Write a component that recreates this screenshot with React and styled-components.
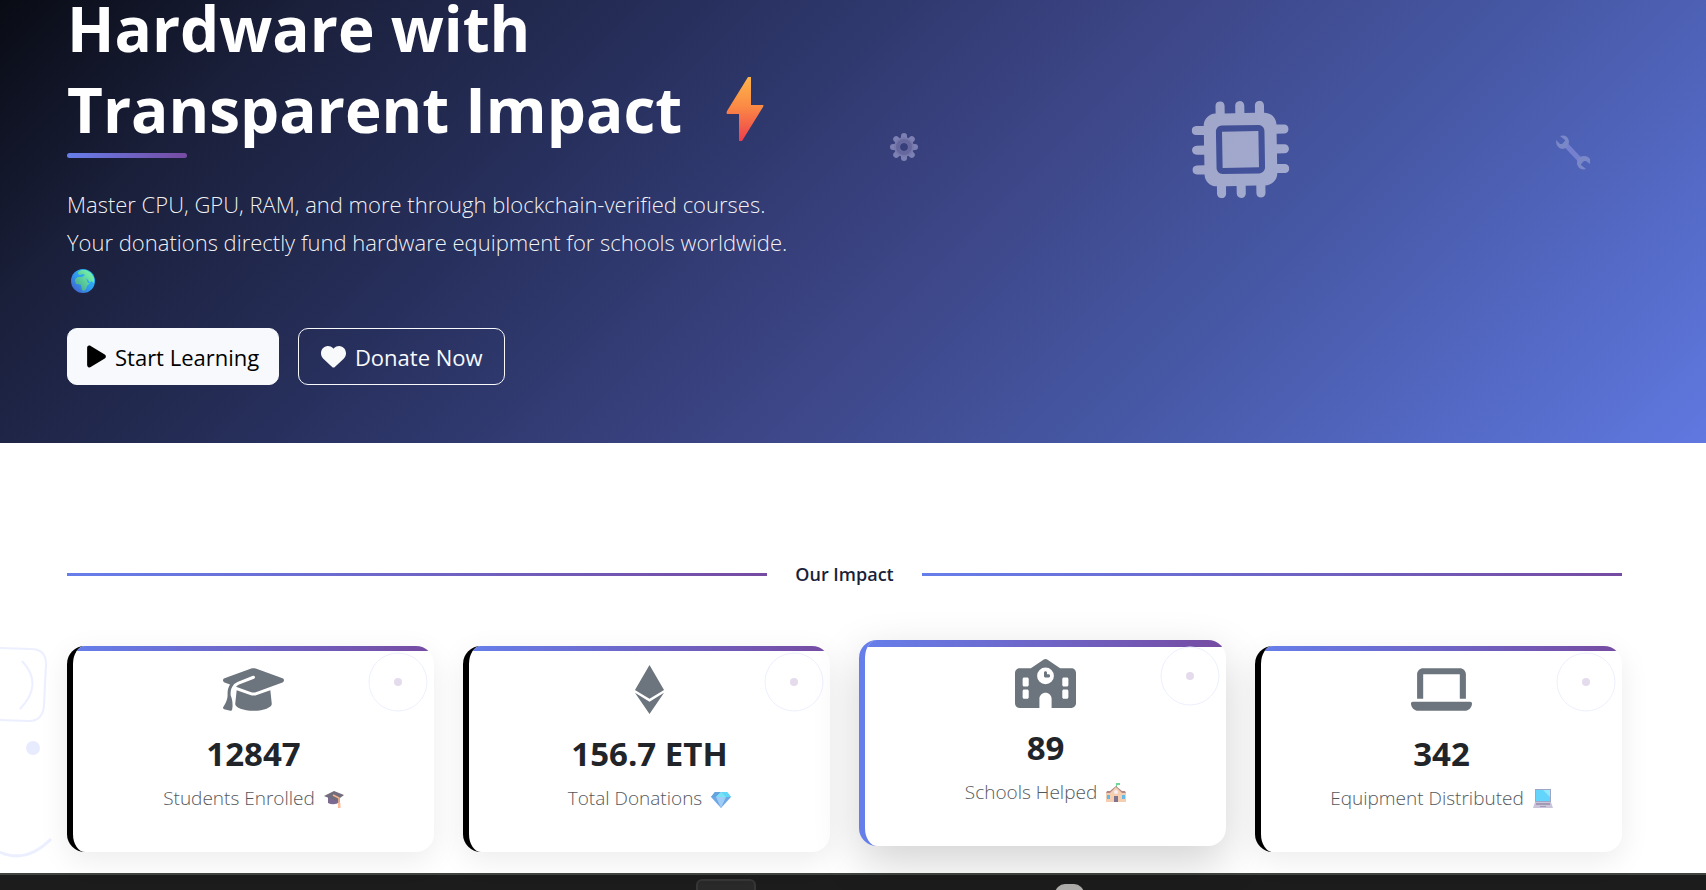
import React from "react";
import styled, { createGlobalStyle, css } from "styled-components";
import { FaPlay, FaHeart, FaGraduationCap, FaEthereum, FaSchool, FaLaptop, FaMicrochip } from "react-icons/fa6";

const Global = createGlobalStyle`
  *, *::before, *::after { box-sizing: border-box; }
  body {
    margin: 0;
    background: #fff;
    color: #212529;
    font-family: "Segoe UI", "Open Sans", "Noto Sans", sans-serif;
    font-size: 18px;
    overflow: hidden;
  }
  h1, h2, p { margin: 0; }
`;

const Page = styled.div`
  display: flex;
  flex-direction: column;
  height: 100vh;
  overflow: hidden;
`;

const Hero = styled.header`
  display: grid;
  grid-template-columns: 1fr 1fr;
  column-gap: 28px;
  flex: none;
  padding: 0 84px 58px 67px;
  background: linear-gradient(135deg, #090b14 0%, #1a1f3a 14%, #28315f 34%, #3c4585 54%, #4658a5 72%, #6078e0 100%);
`;

const HeroText = styled.div`
  margin-top: -12px;
`;

const Title = styled.h1`
  position: relative;
  color: #fff;
  font-size: 62px;
  font-weight: 700;
  line-height: 81px;
  white-space: nowrap;
  &::after {
    content: "";
    position: absolute;
    left: 0;
    bottom: -8px;
    width: 120px;
    height: 5px;
    border-radius: 3px;
    background: linear-gradient(90deg, #667eea, #764ba2);
  }
`;

const Bolt = styled.svg`
  width: 38px;
  height: 66px;
  margin-left: 44px;
  vertical-align: -9px;
`;

const Lead = styled.p`
  margin-top: 35px;
  color: rgba(255, 255, 255, 0.95);
  font-size: 22px;
  font-weight: 300;
  line-height: 38px;
`;

const Globe = styled.svg`
  display: block;
  width: 24px;
  height: 24px;
  margin: 8px 0 0 4px;
`;

const Actions = styled.div`
  display: flex;
  gap: 19px;
  margin-top: 35px;
`;

const Button = styled.button`
  display: flex;
  align-items: center;
  justify-content: center;
  gap: 9px;
  min-width: 207px;
  height: 57px;
  padding: 0 19px;
  border: 1px solid #f8f9fa;
  border-radius: 10px;
  font: 400 22px/34px "Segoe UI", "Open Sans", "Noto Sans", sans-serif;
  background: ${(p) => (p.$outline ? "transparent" : "#f8f9fc")};
  color: ${(p) => (p.$outline ? "#f8f9fa" : "#000")};
`;

const PlayIcon = styled(FaPlay)`
  width: 19px;
  height: 25px;
`;

const HeartIcon = styled(FaHeart)`
  width: 25px;
  height: 25px;
`;

const Art = styled.div`
  display: grid;
  grid-template-columns: 1fr auto 1fr;
  align-items: start;
  padding: 101px 31px 0;
  color: rgba(255, 255, 255, 0.5);
`;

const Gear = styled.svg`
  width: 28px;
  height: 28px;
  margin-top: 32px;
`;

const Chip = styled(FaMicrochip)`
  width: 97px;
  height: 97px;
  transform: rotate(-1deg);
`;

const Wrench = styled.svg`
  justify-self: end;
  width: 36px;
  height: 36px;
  margin-top: 33px;
`;

const Impact = styled.main`
  position: relative;
  flex: 1;
  padding: 118px 84px 20px 67px;
`;

const Doodle = styled.svg`
  position: absolute;
  left: 0;
  top: 200px;
  width: 60px;
  height: 220px;
`;

const Divider = styled.div`
  display: flex;
  align-items: center;
  gap: 28px;
  &::before, &::after {
    content: "";
    flex: 1;
    height: 3px;
    background: linear-gradient(90deg, #667eea, #764ba2);
  }
`;

const DividerTitle = styled.h2`
  color: #1a1f3a;
  font-size: 18px;
  font-weight: 600;
  line-height: 27px;
`;

const Cards = styled.section`
  display: grid;
  grid-template-columns: repeat(4, 1fr);
  gap: 29px;
  margin-top: 58px;
`;

const Card = styled.article`
  position: relative;
  display: flex;
  flex-direction: column;
  align-items: center;
  height: 206px;
  padding: 12px 24px 0;
  overflow: hidden;
  border-left: 6px solid #000;
  border-radius: 18px;
  background: #fff;
  box-shadow: 0 8px 30px rgba(0, 0, 0, 0.08);
  &::before {
    content: "";
    position: absolute;
    inset: 0 0 auto 0;
    height: ${(p) => (p.$raised ? 7 : 5)}px;
    background: linear-gradient(90deg, #667eea, #764ba2);
  }
  ${(p) => p.$raised && css`
    border-left-color: #667eea;
    transform: translateY(-6px);
    box-shadow: 0 16px 46px rgba(0, 0, 0, 0.18);
  `}
`;

const Orbit = styled.svg`
  position: absolute;
  top: 6px;
  right: 6px;
  width: 60px;
  height: 60px;
`;

const CardIcon = styled.div`
  display: flex;
  align-items: center;
  height: 62px;
  color: #6c757d;
  svg { width: 61px; height: 49px; }
`;

const Value = styled.strong`
  margin-top: 12px;
  font-size: 33px;
  font-weight: 700;
  line-height: 44px;
`;

const Label = styled.div`
  display: flex;
  align-items: center;
  gap: 9px;
  margin-top: 8px;
  color: #54585c;
  font-size: 19px;
  font-weight: 300;
  line-height: 29px;
  svg { width: 20px; height: 20px; opacity: 0.75; }
`;

const Dock = styled.footer`
  display: flex;
  flex: none;
  height: 17px;
  padding-left: 696px;
  gap: 299px;
  border-top: 2px solid #414542;
  background: #1c1c1c;
  overflow: hidden;
`;

const DockTile = styled.span`
  width: 60px;
  height: 24px;
  margin-top: 4px;
  border: 2px solid #363636;
  border-radius: 6px;
  background: #292929;
`;

const DockDot = styled.span`
  width: 29px;
  height: 29px;
  margin-top: 9px;
  border-radius: 10px;
  background: #b2b0af;
`;

const CapEmoji = () => (
  <svg viewBox="0 0 20 20" aria-hidden="true">
    <path d="M4 8v6q6 3 12-1V7z" fill="#51396f" />
    <path d="M0 7 10 2l10 4-8 6z" fill="#433b52" />
    <path d="M9 6l6 3v9" fill="none" stroke="#ee9b63" strokeWidth="1.6" />
    <path d="M14 14h2.500v5H14z" fill="#ffa477" />
  </svg>
);

const GemEmoji = () => (
  <svg viewBox="0 0 20 20" aria-hidden="true">
    <path d="M4 3h12l4 5-10 11L0 8z" fill="#3d8bdc" />
    <path d="M4 3h6L5 8H0z" fill="#2f86d2" />
    <path d="M10 3h6l4 5h-5z" fill="#25cdf5" />
    <path d="M10 3 5 8l5 11 5-11z" fill="#80baf5" />
    <path d="M10 3 5 8h10z" fill="#4adcf4" />
  </svg>
);

const SchoolEmoji = () => (
  <svg viewBox="0 0 20 20" aria-hidden="true">
    <path d="M10 0h4v2h-3v3h-1z" fill="#45c978" />
    <path d="M0 10h4l6-6 6 6h4v9H0z" fill="#f2bd95" />
    <path d="M0 10h4l6-6 6 6h4l-1-2h-3l-6-5-6 5H1z" fill="#9b6059" />
    <circle cx="10" cy="9" r="2" fill="#f3e9f5" />
    <path d="M1 12h3v4H1zM16 12h3v4h-3z" fill="#2fa4df" />
    <path d="M8 13h4v6H8z" fill="#54456b" />
  </svg>
);

const LaptopEmoji = () => (
  <svg viewBox="0 0 20 20" aria-hidden="true">
    <path d="M2 0h16v13H2z" fill="#7e87b5" />
    <path d="M3 1h14v11H3z" fill="#2fc8fb" />
    <path d="M10 1h7v7z" fill="#69e3ff" />
    <path d="M2 13h16l2 6H0z" fill="#b9b1cf" />
    <path d="M3 14h14v2H3zM7 17h6v1H7z" fill="#83799b" />
  </svg>
);

const STATS = [
  { value: "12847", label: "Students Enrolled", Icon: FaGraduationCap, Emoji: CapEmoji },
  { value: "156.7 ETH", label: "Total Donations", Icon: FaEthereum, Emoji: GemEmoji },
  { value: "89", label: "Schools Helped", Icon: FaSchool, Emoji: SchoolEmoji, raised: true },
  { value: "342", label: "Equipment Distributed", Icon: FaLaptop, Emoji: LaptopEmoji },
];

const TEETH = [0, 45, 90, 135, 180, 225, 270, 315];

export default function App() {
  return (
    <Page>
      <Global />
      <Hero>
        <HeroText>
          <Title>
            Hardware with
            <br />
            Transparent Impact
            <Bolt viewBox="0 0 38 66" aria-hidden="true">
              <defs>
                <linearGradient id="bolt" x1="0" y1="0" x2="0" y2="1">
                  <stop offset="0" stopColor="#fdb44b" />
                  <stop offset="0.45" stopColor="#fb8b45" />
                  <stop offset="1" stopColor="#ee3f4b" />
                </linearGradient>
              </defs>
              <path d="M22 1h3v28h12q1 0 0 2L16 65h-3V38H1q-1-1 0-3z" fill="url(#bolt)" />
            </Bolt>
          </Title>
          <Lead>
            Master CPU, GPU, RAM, and more through blockchain-verified courses.
            <br />
            Your donations directly fund hardware equipment for schools worldwide.
          </Lead>
          <Globe viewBox="0 0 24 24" aria-hidden="true">
            <defs>
              <linearGradient id="sea" x1="1" y1="0" x2="0" y2="1">
                <stop offset="0" stopColor="#26c2f5" />
                <stop offset="0.5" stopColor="#2f9df2" />
                <stop offset="1" stopColor="#4656c4" />
              </linearGradient>
              <linearGradient id="land" x1="1" y1="0" x2="0" y2="1">
                <stop offset="0" stopColor="#7dffb0" />
                <stop offset="1" stopColor="#3fa08a" />
              </linearGradient>
            </defs>
            <circle cx="12" cy="12" r="12" fill="url(#sea)" />
            <path d="M4 12q0-3 3-4h4l1 1h3l2 5h2l-3 3-1 3-2 2-2-1-1-5-3-1H5zM7 3l3-2 5 0 5 3 3 5 0 5-3-2-1 2-2-3-2-2h-3l-1-1 3-2-2-1-3 1-2-1z" fill="url(#land)" />
          </Globe>
          <Actions>
            <Button type="button"><PlayIcon />Start Learning</Button>
            <Button type="button" $outline><HeartIcon />Donate Now</Button>
          </Actions>
        </HeroText>
        <Art aria-hidden="true">
          <Gear viewBox="-14 -14 28 28">
            <g fill="#7d80b2">
              {TEETH.map((a) => (
                <rect key={a} x="-3" y="-14" width="6" height="8" rx="3" transform={`rotate(${a})`} />
              ))}
            </g>
            <circle r="7" fill="none" stroke="#7779ac" strokeWidth="6" />
            <circle r="6" fill="none" stroke="#65679d" strokeWidth="4" />
          </Gear>
          <Chip />
          <Wrench viewBox="0 0 36 36">
            <path d="M10 10 26 27" stroke="#7580cf" strokeWidth="5" />
            <path d="M5 2Q12 0 14 7 14 14 7 15 1 14 1 6l4 4h2l3-3V6z" fill="#7b88c8" />
            <path d="M31 35Q24 37 22 30 22 22 29 22q4 0 6 3l0 5-4-3h-2l-3 3v1z" fill="#7b88c8" />
          </Wrench>
        </Art>
      </Hero>
      <Impact>
        <Doodle viewBox="0 0 60 220" fill="none" stroke="#ecefff" aria-hidden="true">
          <path d="M0 5 31 6q15 0 15 15L44 62q-1 16-15 16L0 77" strokeWidth="2" />
          <path d="M22 18q22 23-2 48" strokeWidth="2" />
          <circle cx="33" cy="105" r="7" fill="#e8ebfd" stroke="none" />
          <path d="M0 209q26 12 51-13" strokeWidth="3" />
        </Doodle>
        <Divider><DividerTitle>Our Impact</DividerTitle></Divider>
        <Cards>
          {STATS.map(({ value, label, Icon, Emoji, raised }) => (
            <Card key={label} $raised={raised}>
              <Orbit viewBox="0 0 60 60" aria-hidden="true">
                <circle cx="30" cy="30" r="29" fill="none" stroke="#eceffd" />
                <circle cx="30" cy="30" r="4" fill="#e4dbed" />
              </Orbit>
              <CardIcon><Icon /></CardIcon>
              <Value>{value}</Value>
              <Label>{label}<Emoji /></Label>
            </Card>
          ))}
        </Cards>
      </Impact>
      <Dock><DockTile /><DockDot /></Dock>
    </Page>
  );
}
